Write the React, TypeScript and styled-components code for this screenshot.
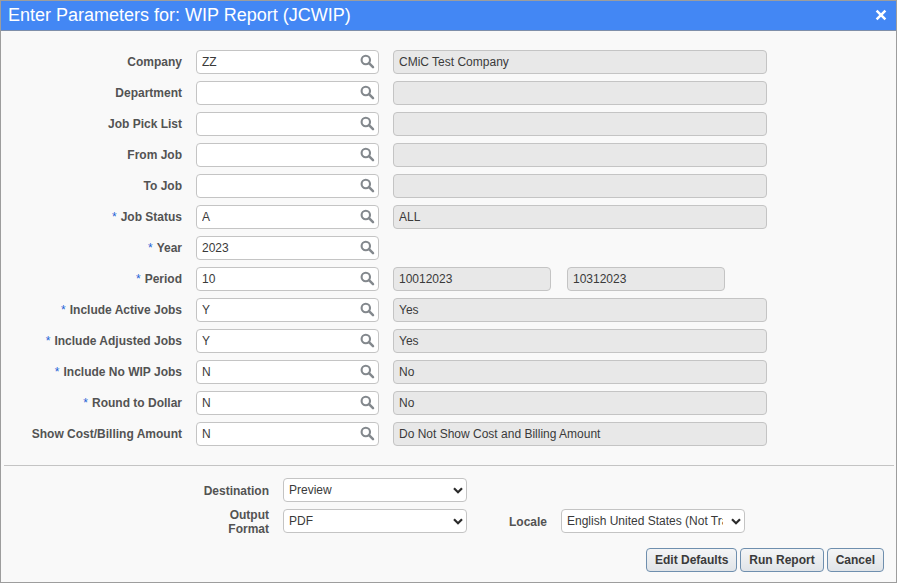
import React from "react";
import styled, { createGlobalStyle } from "styled-components";

const GlobalStyle = createGlobalStyle`
  * { box-sizing: border-box; }
  body {
    margin: 0;
    background: #f9f9f9;
    color: #3a3a3a;
    font: 12px/14px "Liberation Sans", Arial, sans-serif;
  }
  input, select, button { font: inherit; color: inherit; margin: 0; }
`;

const Dialog = styled.form`
  display: flex;
  flex-direction: column;
  min-height: 100vh;
  border: 1px solid #9d9d9d;
  background: #f9f9f9;
`;

const TitleBar = styled.header`
  display: flex;
  align-items: center;
  justify-content: space-between;
  height: 30px;
  padding: 0 9px 1px 7px;
  background: #4387f4;
  border-bottom: 1px solid #7f8fa9;
  color: #fff;
`;

const Title = styled.h1`
  margin: 0;
  font-size: 18px;
  line-height: 28px;
  font-weight: 400;
`;

const CloseButton = styled.button`
  display: flex;
  padding: 0;
  border: 0;
  background: none;
  cursor: pointer;
`;

const Parameters = styled.section`
  display: flex;
  flex-direction: column;
  gap: 7px;
  padding: 19px 0;
`;

const ParameterRow = styled.div`
  display: grid;
  grid-template-columns: 181px 183px minmax(0, 374px);
  column-gap: 14px;
  align-items: center;
`;

const Label = styled.label`
  text-align: right;
  font-weight: 700;
  color: #535353;
`;

const Required = styled.span`
  margin-right: 4px;
  font-weight: 400;
  color: #1f62d6;
`;

const LookupBox = styled.div`
  display: flex;
  align-items: center;
  height: 24px;
  padding-right: 3px;
  border: 1px solid #c4c4c4;
  border-radius: 4px;
  background: #fff;
`;

const LookupInput = styled.input`
  flex: 1;
  min-width: 0;
  height: 22px;
  padding: 0 0 0 5px;
  border: 0;
  outline: 0;
  background: none;
`;

const LookupButton = styled.button`
  display: flex;
  padding: 0;
  border: 0;
  background: none;
  cursor: pointer;
`;

const Descriptions = styled.div`
  display: flex;
  gap: 16px;
`;

const Description = styled.input<{ $half?: boolean }>`
  flex: ${(p) => (p.$half ? "0 1 158px" : "1")};
  min-width: 0;
  height: 24px;
  padding: 0 5px;
  border: 1px solid #c4c4c4;
  border-radius: 4px;
  outline: 0;
  background: #e8e8e8;
`;

const Divider = styled.hr`
  align-self: stretch;
  margin: 0 2px 0 3px;
  border: 0;
  border-top: 1px solid #c4c4c4;
`;

const OutputOptions = styled.section`
  display: grid;
  grid-template-columns: 70px 184px 66px 184px;
  grid-auto-rows: 24px;
  gap: 7px 14px;
  align-items: center;
  padding: 12px 0 15px 198px;
`;

const Select = styled.select`
  appearance: none;
  width: 100%;
  height: 24px;
  padding: 0 21px 0 5px;
  border: 1px solid #c4c4c4;
  border-radius: 4px;
  background: #fff;
`;

const SelectBox = styled.div`
  position: relative;
`;

const Chevron = styled.svg`
  position: absolute;
  top: 9px;
  right: 4px;
  pointer-events: none;
`;

const OutputLabel = styled(Label)<{ $newRow?: boolean }>`
  grid-column-start: ${(p) => (p.$newRow ? "1" : "auto")};
  padding-top: 2px;
`;

const Actions = styled.footer`
  display: flex;
  justify-content: flex-end;
  gap: 3px;
  padding: 0 12px 10px;
`;

const ActionButton = styled.button`
  height: 24px;
  padding: 0 8px;
  border: 1px solid #6f8fae;
  border-radius: 4px;
  background: linear-gradient(#f4f5f6, #e0e4e8);
  font-weight: 700;
  white-space: nowrap;
  cursor: pointer;
`;

type Parameter = {
  label: string;
  required?: boolean;
  value?: string;
  descriptions: string[];
};

const parameters: Parameter[] = [
  { label: "Company", value: "ZZ", descriptions: ["CMiC Test Company"] },
  { label: "Department", descriptions: [""] },
  { label: "Job Pick List", descriptions: [""] },
  { label: "From Job", descriptions: [""] },
  { label: "To Job", descriptions: [""] },
  { label: "Job Status", required: true, value: "A", descriptions: ["ALL"] },
  { label: "Year", required: true, value: "2023", descriptions: [] },
  { label: "Period", required: true, value: "10", descriptions: ["10012023", "10312023"] },
  { label: "Include Active Jobs", required: true, value: "Y", descriptions: ["Yes"] },
  { label: "Include Adjusted Jobs", required: true, value: "Y", descriptions: ["Yes"] },
  { label: "Include No WIP Jobs", required: true, value: "N", descriptions: ["No"] },
  { label: "Round to Dollar", required: true, value: "N", descriptions: ["No"] },
  { label: "Show Cost/Billing Amount", value: "N", descriptions: ["Do Not Show Cost and Billing Amount"] },
];

const SearchIcon = () => (
  <svg width="15" height="16" viewBox="0 0 15 16" fill="none" stroke="#83888d" aria-hidden="true">
    <circle cx="5.8" cy="6" r="4.2" strokeWidth="2.1" />
    <path d="M9 9.2 13 13.2" strokeWidth="2.5" strokeLinecap="round" />
  </svg>
);

const CloseIcon = () => (
  <svg width="12" height="12" viewBox="0 0 12 12" stroke="#fff" strokeWidth="2.5" aria-hidden="true">
    <path d="M1.6 1.6 10.4 10.4M10.4 1.6 1.6 10.4" />
  </svg>
);

function OutputSelect({ id, options }: { id: string; options: string[] }) {
  return (
    <SelectBox>
      <Select id={id}>
        {options.map((o) => (
          <option key={o}>{o}</option>
        ))}
      </Select>
      <Chevron width="10" height="7" viewBox="0 0 10 7" fill="none" stroke="#2b2b2b" strokeWidth="2.2" aria-hidden="true">
        <path d="M1 1.2 5 5.2 9 1.2" />
      </Chevron>
    </SelectBox>
  );
}

export default function App() {
  return (
    <>
      <GlobalStyle />
      <Dialog onSubmit={(e) => e.preventDefault()}>
        <TitleBar>
          <Title>Enter Parameters for: WIP Report (JCWIP)</Title>
          <CloseButton type="button" aria-label="Close">
            <CloseIcon />
          </CloseButton>
        </TitleBar>
        <Parameters>
          {parameters.map((p, i) => (
            <ParameterRow key={p.label}>
              <Label htmlFor={`param-${i}`}>
                {p.required && <Required>*</Required>}
                {p.label}
              </Label>
              <LookupBox>
                <LookupInput id={`param-${i}`} defaultValue={p.value} required={p.required} />
                <LookupButton type="button" aria-label={`Search ${p.label}`}>
                  <SearchIcon />
                </LookupButton>
              </LookupBox>
              <Descriptions>
                {p.descriptions.map((d, j) => (
                  <Description
                    key={j}
                    readOnly
                    value={d}
                    aria-label={`${p.label} description ${j + 1}`}
                    $half={p.descriptions.length > 1}
                  />
                ))}
              </Descriptions>
            </ParameterRow>
          ))}
        </Parameters>
        <Divider />
        <OutputOptions>
          <OutputLabel htmlFor="destination">Destination</OutputLabel>
          <OutputSelect id="destination" options={["Preview"]} />
          <OutputLabel htmlFor="format" $newRow>Output Format</OutputLabel>
          <OutputSelect id="format" options={["PDF"]} />
          <OutputLabel htmlFor="locale">Locale</OutputLabel>
          <OutputSelect id="locale" options={["English United States (Not Translated)"]} />
        </OutputOptions>
        <Actions>
          <ActionButton type="button">Edit Defaults</ActionButton>
          <ActionButton type="submit">Run Report</ActionButton>
          <ActionButton type="button">Cancel</ActionButton>
        </Actions>
      </Dialog>
    </>
  );
}
